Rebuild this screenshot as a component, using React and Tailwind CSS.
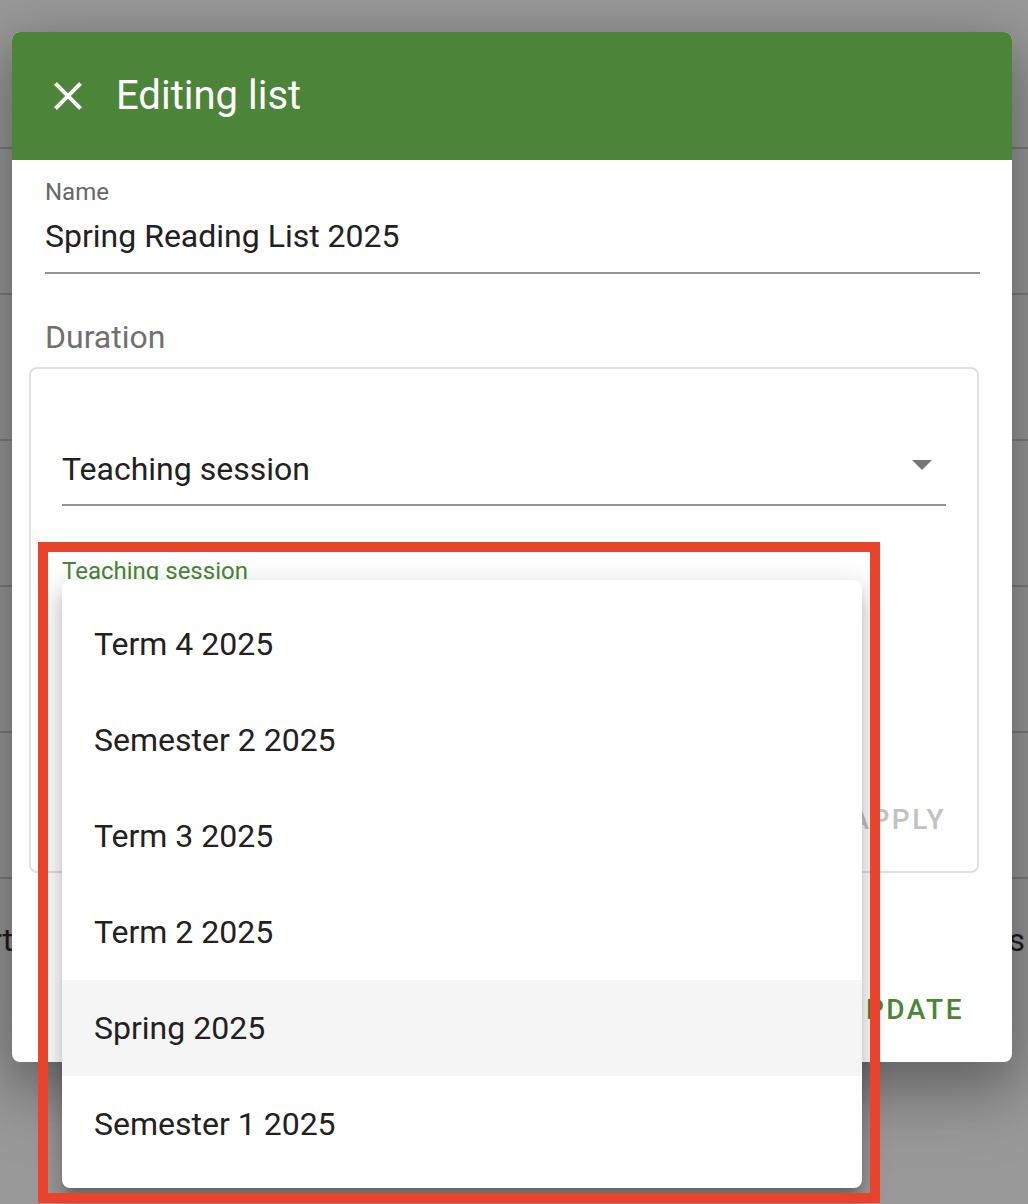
import React from "react";

const items = ["Term 4 2025", "Semester 2 2025", "Term 3 2025", "Term 2 2025", "Spring 2025", "Semester 1 2025"];

function BgRow({ children }) {
  return (
    <div className="h-[146px] border-b-2 border-[#7e7e7e] flex items-center justify-between">{children}</div>
  );
}

export default function App() {
  return (
    <div className="relative w-[1028px] h-[1204px] overflow-hidden bg-[#999999] font-[Roboto,sans-serif]">
      {/* underlying page (behind backdrop) */}
      <div className="pt-[3px] flex flex-col">
        <BgRow />
        <BgRow />
        <BgRow />
        <BgRow />
        <BgRow />
        <BgRow />
        <div className="h-[146px] flex items-start justify-between pt-[45px]">
          <div className="w-[13px] flex justify-end">
            <span className="whitespace-nowrap text-[32px] leading-[32px] text-[#1e1e1e]">Start</span>
          </div>
          <div className="pr-[3px]">
            <span className="whitespace-nowrap text-[32px] leading-[32px] text-[#1e1e1e]">Items</span>
          </div>
        </div>
      </div>

      {/* dialog */}
      <div className="absolute left-[12px] top-[32px] w-[1000px] h-[1030px] bg-white rounded-[8px] overflow-hidden shadow-[0_24px_76px_8px_rgba(0,0,0,0.22),0_18px_48px_4px_rgba(0,0,0,0.18)] flex flex-col">
        <div className="h-[128px] bg-[#4c843a] flex items-center pl-[32px] shrink-0">
          <svg width="48" height="48" viewBox="0 0 24 24" fill="#ffffff">
            <path d="M19 6.41 17.59 5 12 10.59 6.41 5 5 6.41 10.59 12 5 17.59 6.41 19 12 13.41 17.59 19 19 17.59 13.41 12z" />
          </svg>
          <span className="ml-[24px] text-[40px] leading-[40px] text-white">Editing list</span>
        </div>

        <div className="pl-[33px] pr-[32px] flex flex-col">
          <div className="mt-[20px] text-[24px] leading-[24px] text-[#666666]">Name</div>
          <div className="mt-[16px] text-[32px] leading-[32px] text-[#212121]">Spring Reading List 2025</div>
          <div className="mt-[20px] h-[2px] bg-[#949494]" />

          <div className="mt-[47px] text-[32px] leading-[32px] text-[#707070]">Duration</div>

          <div className="mt-[14px] -ml-[16px] mr-[1px] h-[506px] border-2 border-[#e0e0e0] rounded-[8px] px-[31px] pt-[84px] flex flex-col">
            <div className="flex items-start justify-between">
              <span className="text-[32px] leading-[32px] text-[#212121]">Teaching session</span>
              <svg className="mt-[7px] mr-[14px]" width="20" height="10" viewBox="7 10 10 5" fill="#757575">
                <path d="M7 10l5 5 5-5z" />
              </svg>
            </div>
            <div className="mt-[19px] h-[2px] bg-[#949494]" />
            <div className="mt-[53px] text-[24px] leading-[24px] text-[#4c843a]">Teaching session</div>
            <div className="mt-[223px] flex justify-end">
              <span className="text-[28px] leading-[28px] font-medium tracking-[2.5px] text-[#c2c2c2]">APPLY</span>
            </div>
          </div>

          <div className="mt-[123px] pr-[16px] flex justify-end">
            <span className="text-[28px] leading-[28px] font-medium tracking-[2.5px] text-[#4c843a]">UPDATE</span>
          </div>
        </div>
      </div>

      {/* select menu popover */}
      <div className="absolute left-[62px] top-[580px] w-[800px] bg-white rounded-[8px] py-[16px] shadow-[0_10px_10px_-6px_rgba(0,0,0,0.2),0_16px_20px_2px_rgba(0,0,0,0.14),0_6px_28px_4px_rgba(0,0,0,0.12)]">
        {items.map((it) => (
          <div
            key={it}
            className={
              "h-[96px] flex items-center pl-[32px] text-[32px] leading-[32px] text-[#212121] " +
              (it === "Spring 2025" ? "bg-[#f5f5f5]" : "bg-white")
            }
          >
            {it}
          </div>
        ))}
      </div>

      {/* annotation box */}
      <div className="absolute left-[38px] top-[542px] w-[842px] h-[661px] border-[10px] border-[#e9432a] pointer-events-none" />
    </div>
  );
}
